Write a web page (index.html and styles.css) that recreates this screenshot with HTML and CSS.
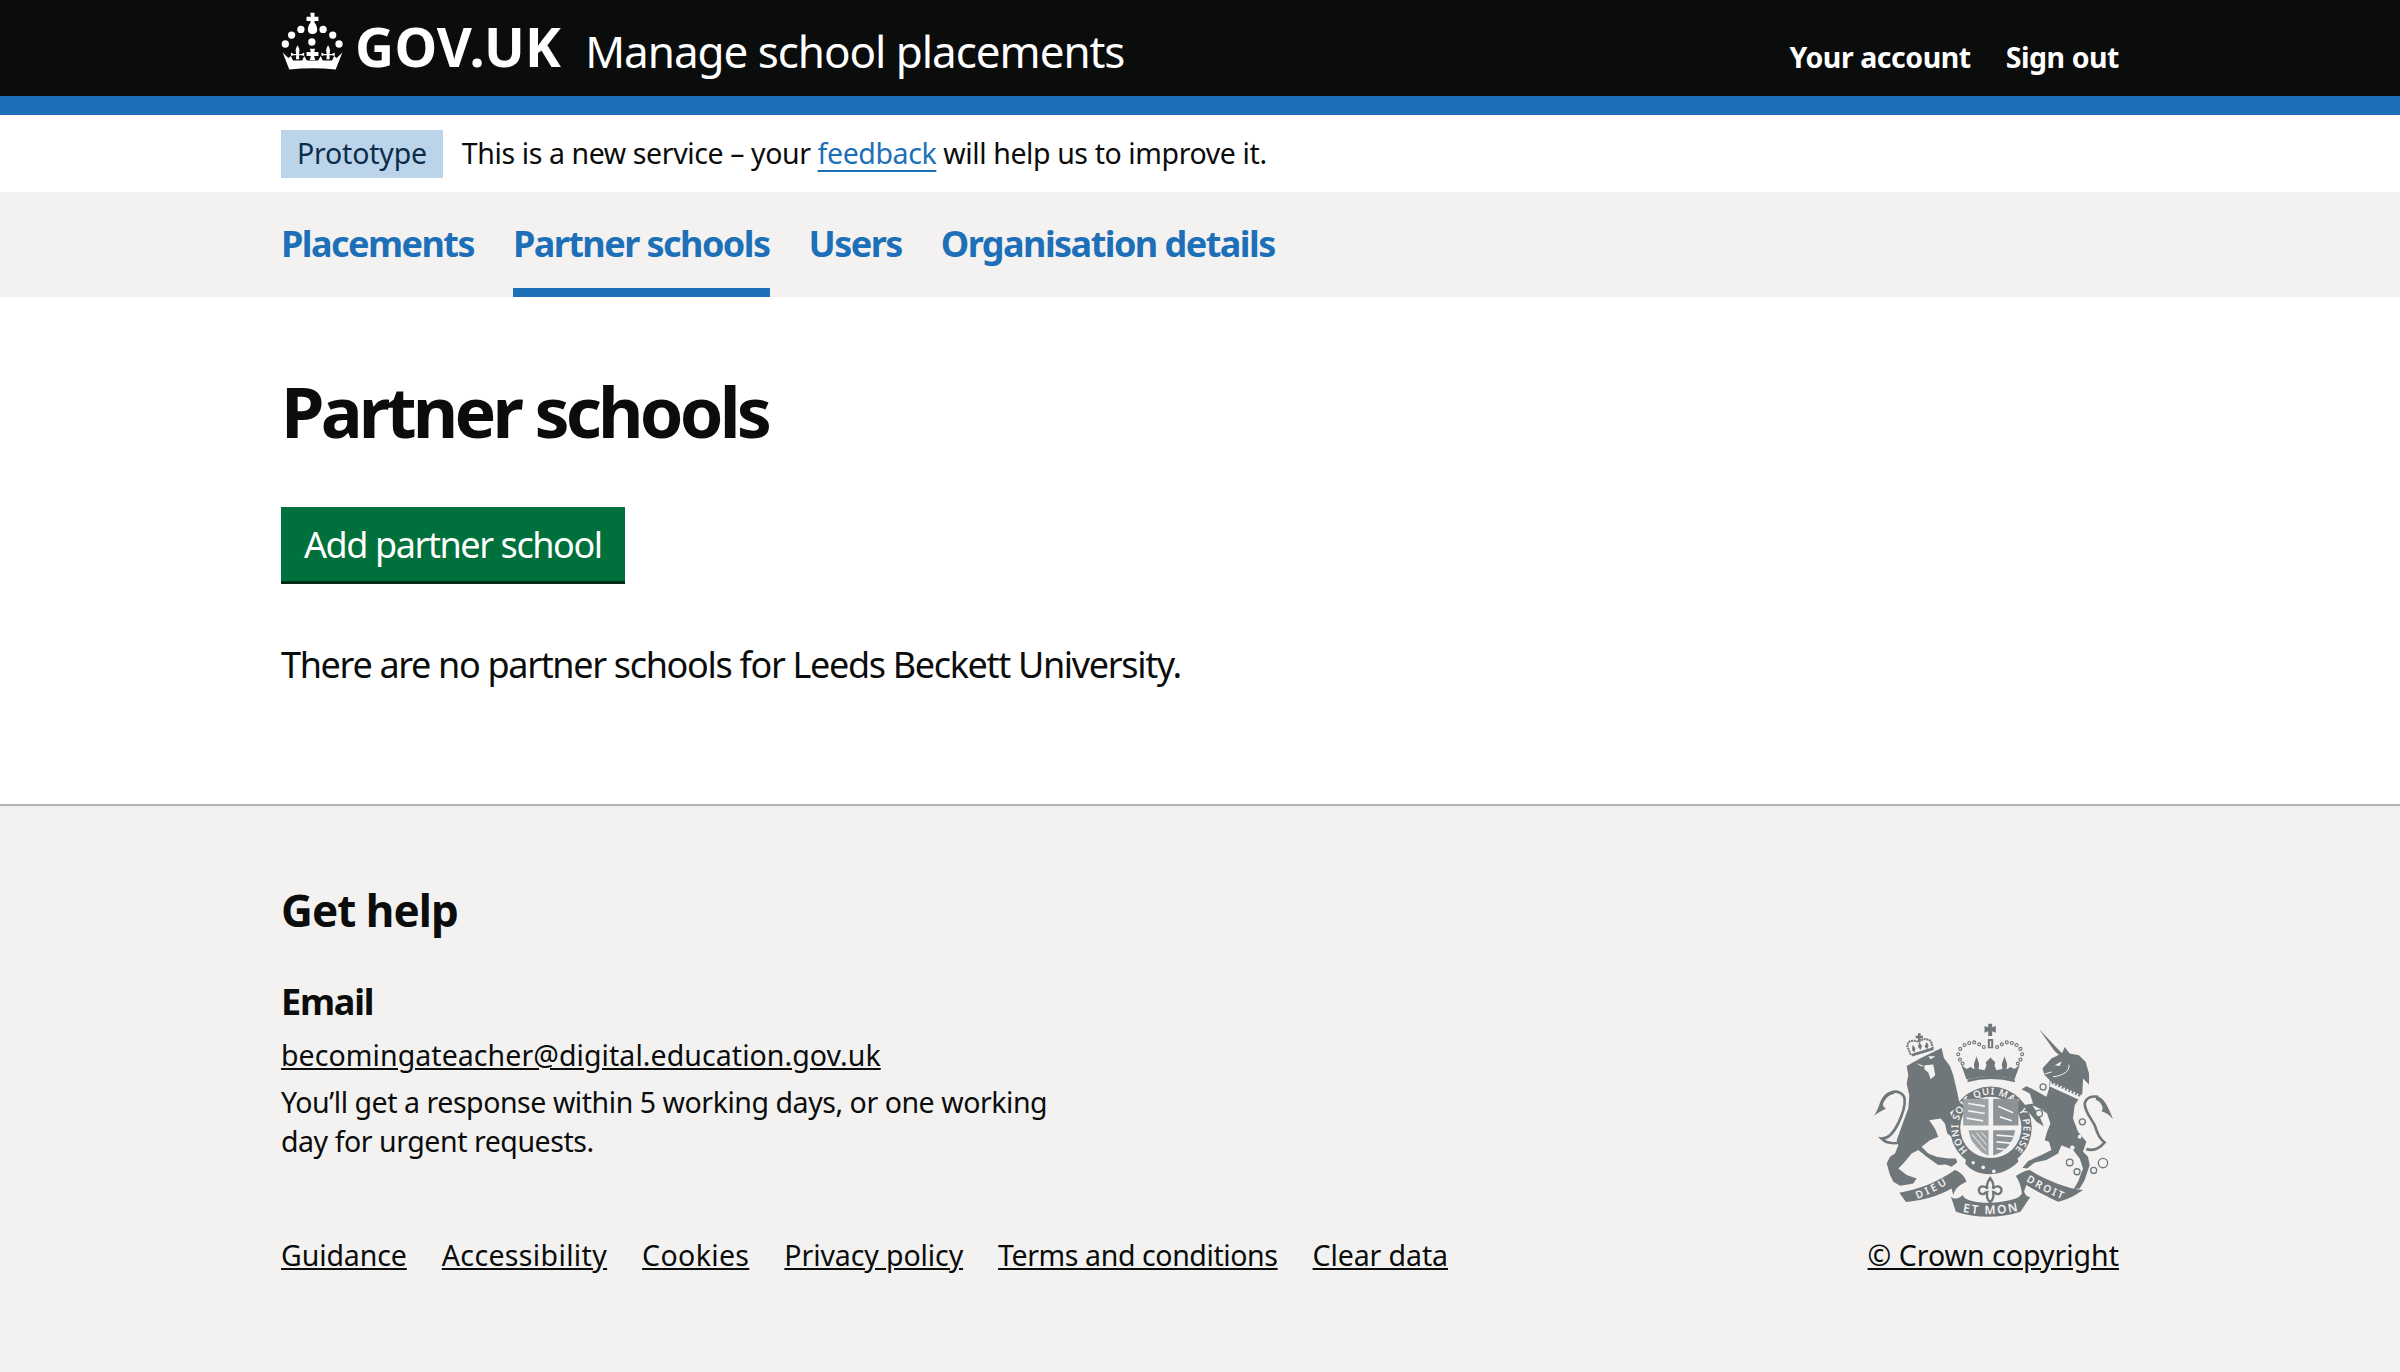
FILE: index.html
```html
<!DOCTYPE html>
<html lang="en">
<head>
<meta charset="utf-8">
<title>Partner schools</title>
<link rel="stylesheet" href="styles.css">
</head>
<body>
<header class="header">
  <div class="container header-row">
    <a class="logo" href="#">
      <svg class="crown" viewBox="30 35 190 180" aria-hidden="true">
        <path d="M118 40h13v12h12v13h-12v5c6 6 8 14 8 22 0 7-4 12-14 12s-14-5-14-12c0-8 2-16 8-22v-5h-12V52h13z"/>
        <circle cx="90" cy="90" r="11"/><circle cx="157" cy="90" r="11"/>
        <circle cx="62" cy="107" r="11"/><circle cx="186" cy="107" r="11"/>
        <circle cx="43" cy="134" r="11"/><circle cx="205" cy="134" r="11"/>
        <circle cx="123" cy="128" r="11"/>
        <path d="M35 160L52 176 60 170 66 184H94L100 170 108 184H142L150 170 156 184H184L190 170 198 176 215 160 195 211Q125 203 55 211Z"/>
        <path d="M80 138c5 8 7 14 5 22l-1 4h8l8-4v10l-8-2h-8l1 12H75l1-12h-8l-8 2v-10l8 4h8l-1-4c-2-8 0-14 5-22z"/>
        <path d="M172 138c5 8 7 14 5 22l-1 4h8l8-4v10l-8-2h-8l1 12h-10l1-12h-8l-8 2v-10l8 4h8l-1-4c-2-8 0-14 5-22z"/>
        <path d="M117 148h16l-3 10h13v12h-13l3 12h-16l3-12h-13v-12h13z"/>
      </svg>
      <span class="logo-text">GOV.UK</span>
    </a>
    <a class="service-name" href="#">Manage school placements</a>
    <nav class="account-nav">
      <a href="#">Your account</a>
      <a href="#">Sign out</a>
    </nav>
  </div>
</header>
<div class="blue-bar"></div>
<div class="phase">
  <div class="container phase-row">
    <strong class="tag">Prototype</strong>
    <span class="phase-text">This is a new service – your <a href="#">feedback</a> will help us to improve it.</span>
  </div>
</div>
<nav class="primary-nav">
  <ul class="container nav-list">
    <li><a href="#">Placements</a></li>
    <li class="is-current"><a href="#">Partner schools</a></li>
    <li><a href="#">Users</a></li>
    <li><a href="#">Organisation details</a></li>
  </ul>
</nav>
<main class="container main">
  <h1 class="title">Partner schools</h1>
  <a class="button" href="#">Add partner school</a>
  <p class="body-text">There are no partner schools for Leeds Beckett University.</p>
</main>
<footer class="footer">
  <div class="container footer-inner">
    <div class="footer-top">
      <div class="help">
        <h2 class="help-title">Get help</h2>
        <h3 class="help-sub">Email</h3>
        <p class="help-link"><a href="#">becomingateacher@digital.education.gov.uk</a></p>
        <p class="help-note">You’ll get a response within 5 working days, or one working day for urgent requests.</p>
      </div>
      <svg class="crest" viewBox="100 65 725 595" aria-hidden="true">
        <defs>
          <path id="garter" d="M384 451A98 98 0 1 1 522 451"/>
          <path id="rib1" d="M232 597Q285 577 332 545"/>
          <path id="rib2" d="M368 635Q450 652 536 632"/>
          <path id="rib3" d="M558 543Q610 575 668 598"/>
        </defs>
        <!-- lion -->
        <g transform="translate(90 75)">
          <path class="cs" d="M92 352C62 358 45 352 34 340 55 342 72 320 84 296 96 272 106 245 104 222 102 204 82 196 65 201"/>
          <path class="cg" d="M70 197C50 198 38 212 30 232 24 250 18 262 12 272 22 262 35 258 48 250 38 245 36 238 44 226 52 214 60 208 72 206Z"/>
          <path class="cg" d="M110 122L150 100 215 68 222 98 240 122 250 150 262 200 270 240 240 262 275 330 268 345 245 335 232 325 225 295 212 280 178 285 195 310 205 335 180 345 155 365 175 385 200 395 235 400 258 400 262 412 245 425 228 418 205 420 170 395 145 375 125 385 100 415 85 430 110 450 140 460 130 475 105 480 90 482 70 470 60 450 50 415 60 395 75 385 85 360 80 345 100 290 115 250 118 210 110 175 115 150Z"/>
          <path class="cb" d="M138 113L170 125 152 122ZM175 93L197 93 182 102ZM165 120L190 118 196 150 182 162 175 142 163 132Z"/>
          <path class="cl" d="M122 88L112 62C112 46 130 42 145 50 160 38 180 38 185 54L189 70"/>
          <path class="cs" d="M125 90L190 70"/>
          <path class="cg" d="M144 24h8v7h7v8h-7v10h-8V39h-7v-8h7zM128 58l8 10-2 14-8-8zM148 50l8 12-4 12-8-10zM170 50l6 10-4 12-8-8z"/>
        </g>
        <!-- centre crown -->
        <path class="cg" d="M445 70h12v11l11-4v20l-11-4v14h-12V93l-11 4V77l11 4z"/>
        <path class="cg" d="M444 116h16v28h-16z"/>
        <path class="cb" d="M450 122h4v18h-4z"/>
        <g class="cdots">
          <circle cx="432" cy="140" r="4.500"/><circle cx="418" cy="132" r="4.500"/><circle cx="403" cy="126" r="4.500"/><circle cx="388" cy="128" r="4.500"/><circle cx="374" cy="134" r="4.500"/><circle cx="361" cy="146" r="4.500"/><circle cx="355" cy="162" r="4.500"/><circle cx="360" cy="178" r="4.500"/><circle cx="368" cy="190" r="4.500"/>
          <circle cx="472" cy="140" r="4.500"/><circle cx="486" cy="132" r="4.500"/><circle cx="501" cy="126" r="4.500"/><circle cx="516" cy="128" r="4.500"/><circle cx="530" cy="134" r="4.500"/><circle cx="542" cy="146" r="4.500"/><circle cx="547" cy="162" r="4.500"/><circle cx="542" cy="178" r="4.500"/><circle cx="534" cy="190" r="4.500"/>
        </g>
        <path class="cg" d="M364 194L380 206 392 200 404 208 402 192 410 168 418 192 416 206 434 210 440 196 438 186 452 172 466 186 464 196 470 210 488 206 486 192 494 168 502 192 500 208 512 200 524 206 540 194 524 238Q452 218 380 238Z"/>
        <path class="cb" d="M386 240Q452 222 518 240L512 256Q452 240 392 256Z"/>
        <path class="cg" d="M384 238Q452 216 524 238L526 246Q452 226 382 246Z"/>
        <!-- garter -->
        <circle class="cg" cx="453" cy="382" r="123"/>
        <circle class="cb" cx="453" cy="382" r="92"/>
        <text class="garter-text"><textPath href="#garter" textLength="458" lengthAdjust="spacing">HONI SOIT QUI MAL Y PENSE</textPath></text>
        <!-- shield -->
        <path class="cq1" d="M370 296H446V376H370Z"/>
        <path class="cq2" d="M460 296H536V376H460Z"/>
        <path class="cq1" d="M386 390H446V466C416 456 392 430 386 390Z"/>
        <path class="cq2" d="M460 390H526C520 430 494 456 460 466Z"/>
        <path class="cls" d="M385 310l50 8M385 332l50 8M380 354l50 8M475 318l45 20M480 350l36 12M470 405l50 4M470 425l44 4M470 445l30 4"/>
        <path class="cls2" d="M396 402l42 50M410 398l30 36M392 420l30 34M424 396l16 18"/>
        <!-- lower band -->
        <path class="cg" d="M380 470C420 502 490 502 530 466L536 484C490 534 410 534 376 490Z"/>
        <circle class="cb" cx="430" cy="502" r="5.500"/><circle class="cb" cx="462" cy="514" r="5.500"/><circle class="cb" cx="400" cy="488" r="5"/>
        <!-- fleur de lis -->
        <path class="fleur" d="M451 534C460 546 463 556 459 566 466 556 484 556 485 570 485 582 472 586 466 578L460 576C462 586 462 598 451 606 440 598 440 586 442 576L436 578C430 586 417 582 417 570 418 556 436 556 443 566 439 556 442 546 451 534Z"/>
        <!-- unicorn -->
        <g transform="translate(450 75)">
          <path class="cg" d="M147 10L205 72 218 85 212 92 195 78Z"/>
          <path class="cg" d="M158 130L185 100 205 90 218 82 225 65 240 85 268 90 288 110 298 145 298 178 280 160 278 205 255 240 250 280 265 320 290 350 280 380 295 395 300 420 285 465 270 490 252 492 265 470 280 430 270 400 250 375 215 360 205 385 170 405 135 412 112 430 98 428 115 408 155 390 185 375 178 350 165 345 172 320 182 295 172 265 150 250 128 240 150 275 162 303 140 290 112 255 100 240 130 235 120 205 95 192 110 183 135 195 170 215 178 190 180 165 175 160 165 150 160 135Z"/>
          <path class="cls2" d="M238 118C240 140 220 150 190 155M166 146L186 140"/>
          <path class="cb" d="M195 120L216 108 210 122Z"/>
          <path class="cb" d="M180 184L268 224 276 210 182 168Z"/>
          <path class="teeth" d="M186 172L272 212"/>
          <circle class="ringl" cx="160" cy="185" r="9"/>
          <circle class="ringl" cx="148" cy="265" r="10"/>
          <circle class="ringl" cx="278" cy="290" r="9"/>
          <circle class="cb" cx="270" cy="335" r="6"/>
          <circle class="cb" cx="248" cy="368" r="7"/>
          <circle class="ring" cx="240" cy="412" r="10"/>
          <circle class="ring" cx="262" cy="440" r="9"/>
          <circle class="ring" cx="312" cy="436" r="9"/>
          <circle class="ring" cx="340" cy="414" r="14"/>
          <path class="cs" d="M290 372C310 378 330 370 345 352 330 340 325 330 315 300 305 280 285 260 285 235 290 215 310 212 325 215"/>
          <path class="cg" d="M320 212C340 215 355 240 370 282 358 268 350 262 335 258 345 250 335 230 318 224Z"/>
        </g>
        <!-- motto -->
        <path class="cg" d="M178 578C235 570 295 545 345 510 362 516 375 530 380 545 362 552 345 565 340 585L335 565C295 588 250 600 198 606Z"/>
        <path class="cg" d="M333 590C345 600 360 595 368 585 375 600 395 605 430 608 465 610 500 605 530 595 540 590 548 580 552 572 558 590 565 590 572 590L542 635C480 655 410 655 348 635Z"/>
        <path class="cg" d="M528 528C540 520 555 512 570 510 620 540 680 565 730 570 700 590 680 600 655 605 620 590 585 570 560 555 555 565 552 580 548 590 545 565 540 545 528 528Z"/>
        <text class="motto"><textPath href="#rib1" textLength="100" lengthAdjust="spacing">DIEU</textPath></text>
        <text class="motto mid"><textPath href="#rib2" textLength="168" lengthAdjust="spacing">ET MON</textPath></text>
        <text class="motto"><textPath href="#rib3" textLength="122" lengthAdjust="spacing">DROIT</textPath></text>
      </svg>
    </div>
    <div class="footer-meta">
      <ul class="meta-links">
        <li><a href="#">Guidance</a></li>
        <li><a class="wide" href="#">Accessibility</a></li>
        <li><a class="wide" href="#">Cookies</a></li>
        <li><a href="#">Privacy policy</a></li>
        <li><a class="tight" href="#">Terms and conditions</a></li>
        <li><a href="#">Clear data</a></li>
      </ul>
      <a class="copyright" href="#">© Crown copyright</a>
    </div>
  </div>
</footer>
</body>
</html>
```

FILE: styles.css
```css
* { box-sizing: border-box; }
html, body { margin: 0; padding: 0; }
body { font-family: "Noto Sans", "Liberation Sans", sans-serif; color: #0b0c0c; background: #fff; }
a { color: inherit; }
ul { list-style: none; margin: 0; padding: 0; }
.container { width: 1838px; margin: 0 auto; }

.header { background: #0b0c0c; height: 96px; color: #fff; }
.header-row { display: flex; align-items: flex-start; height: 96px; }
.logo { display: flex; align-items: flex-start; color: #fff; text-decoration: none; }
.crown { width: 63px; height: 60px; margin-top: 11px; fill: #fff; }
.logo-text { font-size: 54px; line-height: 54px; font-weight: 700; margin-left: 11px; margin-top: 19px; letter-spacing: 0.3px; }
.service-name { font-size: 44px; line-height: 54px; margin-left: 24px; margin-top: 24px; color: #fff; text-decoration: none; letter-spacing: -1.05px; }
.account-nav { margin-left: auto; display: flex; gap: 35px; margin-top: 38px; }
.account-nav a { color: #fff; font-size: 28.5px; line-height: 38px; font-weight: 700; letter-spacing: -0.45px; text-decoration: none; }

.blue-bar { height: 19px; background: #1d70b8; }

.phase { height: 77px; background: #fff; }
.phase-row { display: flex; align-items: flex-start; padding-top: 15px; }
.tag { background: #bbd4ea; color: #0c2d4a; font-size: 28.5px; line-height: 46px; height: 48px; padding: 0 16px; font-weight: 400; letter-spacing: -0.2px; }
.phase-text { font-size: 28.5px; line-height: 46px; margin-left: 19px; letter-spacing: -0.4px; }
.phase-text a { color: #1d70b8; text-underline-offset: 6px; }

.primary-nav { height: 105px; background: #f3f2f1; }
.nav-list { display: flex; gap: 39px; height: 105px; }
.nav-list li { height: 105px; }
.nav-list a { display: block; height: 105px; padding-top: 30px; font-size: 36px; line-height: 44px; font-weight: 700; letter-spacing: -1.55px; color: #1d70b8; text-decoration: none; }
.is-current a { border-bottom: 9px solid #1d70b8; }

.main { height: 507px; padding-top: 72px; }
.title { margin: 0; font-size: 70px; line-height: 84px; font-weight: 700; letter-spacing: -3.8px; }
.button { display: inline-block; margin-top: 54px; height: 77px; background: #00703c; color: #fff; box-shadow: inset 0 -3px 0 #002d18; padding: 0 23px; font-size: 36px; line-height: 75px; letter-spacing: -1.42px; text-decoration: none; }
.body-text { margin: 56px 0 0; font-size: 36px; line-height: 50px; letter-spacing: -1.33px; }

.footer { background: #f3f2f1; border-top: 2px solid #b1b4b6; height: 568px; }
.footer-inner { padding-top: 74px; }
.footer-top { display: flex; justify-content: space-between; align-items: flex-end; height: 345px; }
.help { width: 790px; align-self: flex-start; }
.help-title { margin: 0; font-size: 44px; line-height: 60px; font-weight: 700; letter-spacing: -0.95px; }
.help-sub { margin: 37px 0 0; font-size: 36px; line-height: 50px; font-weight: 700; letter-spacing: -1.2px; }
.help-link { margin: 8px 0 0; font-size: 28.5px; line-height: 40px; letter-spacing: 0.07px; }
.help-note { margin: 8px 0 0; font-size: 28.5px; line-height: 39px; letter-spacing: -0.45px; }
.crest { width: 242px; height: 198px; margin-right: 4px; margin-bottom: 5px; }
.cg { fill: #6f777b; }
.cb { fill: #f3f2f1; }
.cs { fill: none; stroke: #6f777b; stroke-width: 8; }
.cq1 { fill: #9ea3a6; }
.cq2 { fill: #8c9295; }
.fleur { fill: #f3f2f1; stroke: #6f777b; stroke-width: 7; }
.cdots { fill: #f3f2f1; stroke: #6f777b; stroke-width: 3.5; }
.cl { fill: #f3f2f1; stroke: #6f777b; stroke-width: 6; stroke-dasharray: 6 2; }
.cls { fill: none; stroke: #f3f2f1; stroke-width: 5; }
.cls2 { fill: none; stroke: #f3f2f1; stroke-width: 3; }
.teeth { fill: none; stroke: #6f777b; stroke-width: 7; stroke-dasharray: 6 5; }
.ring { fill: none; stroke: #6f777b; stroke-width: 4; }
.ringl { fill: #f3f2f1; stroke: #6f777b; stroke-width: 4; }
.garter-text { font-family: "Noto Sans", sans-serif; font-size: 29px; font-weight: 600; fill: #f3f2f1; }
.motto { font-family: "Noto Sans", sans-serif; font-size: 31px; font-weight: 600; fill: #f3f2f1; }
.mid { font-size: 36px; }

.footer-meta { display: flex; justify-content: space-between; align-items: flex-start; margin-top: 10px; }
.meta-links { display: flex; gap: 35px; }
.meta-links a { font-size: 28.5px; line-height: 40px; letter-spacing: -0.1px; }
.meta-links a.wide { letter-spacing: 0.35px; }
.meta-links a.tight { letter-spacing: -0.4px; }
.copyright { font-size: 28.5px; line-height: 40px; }
```
